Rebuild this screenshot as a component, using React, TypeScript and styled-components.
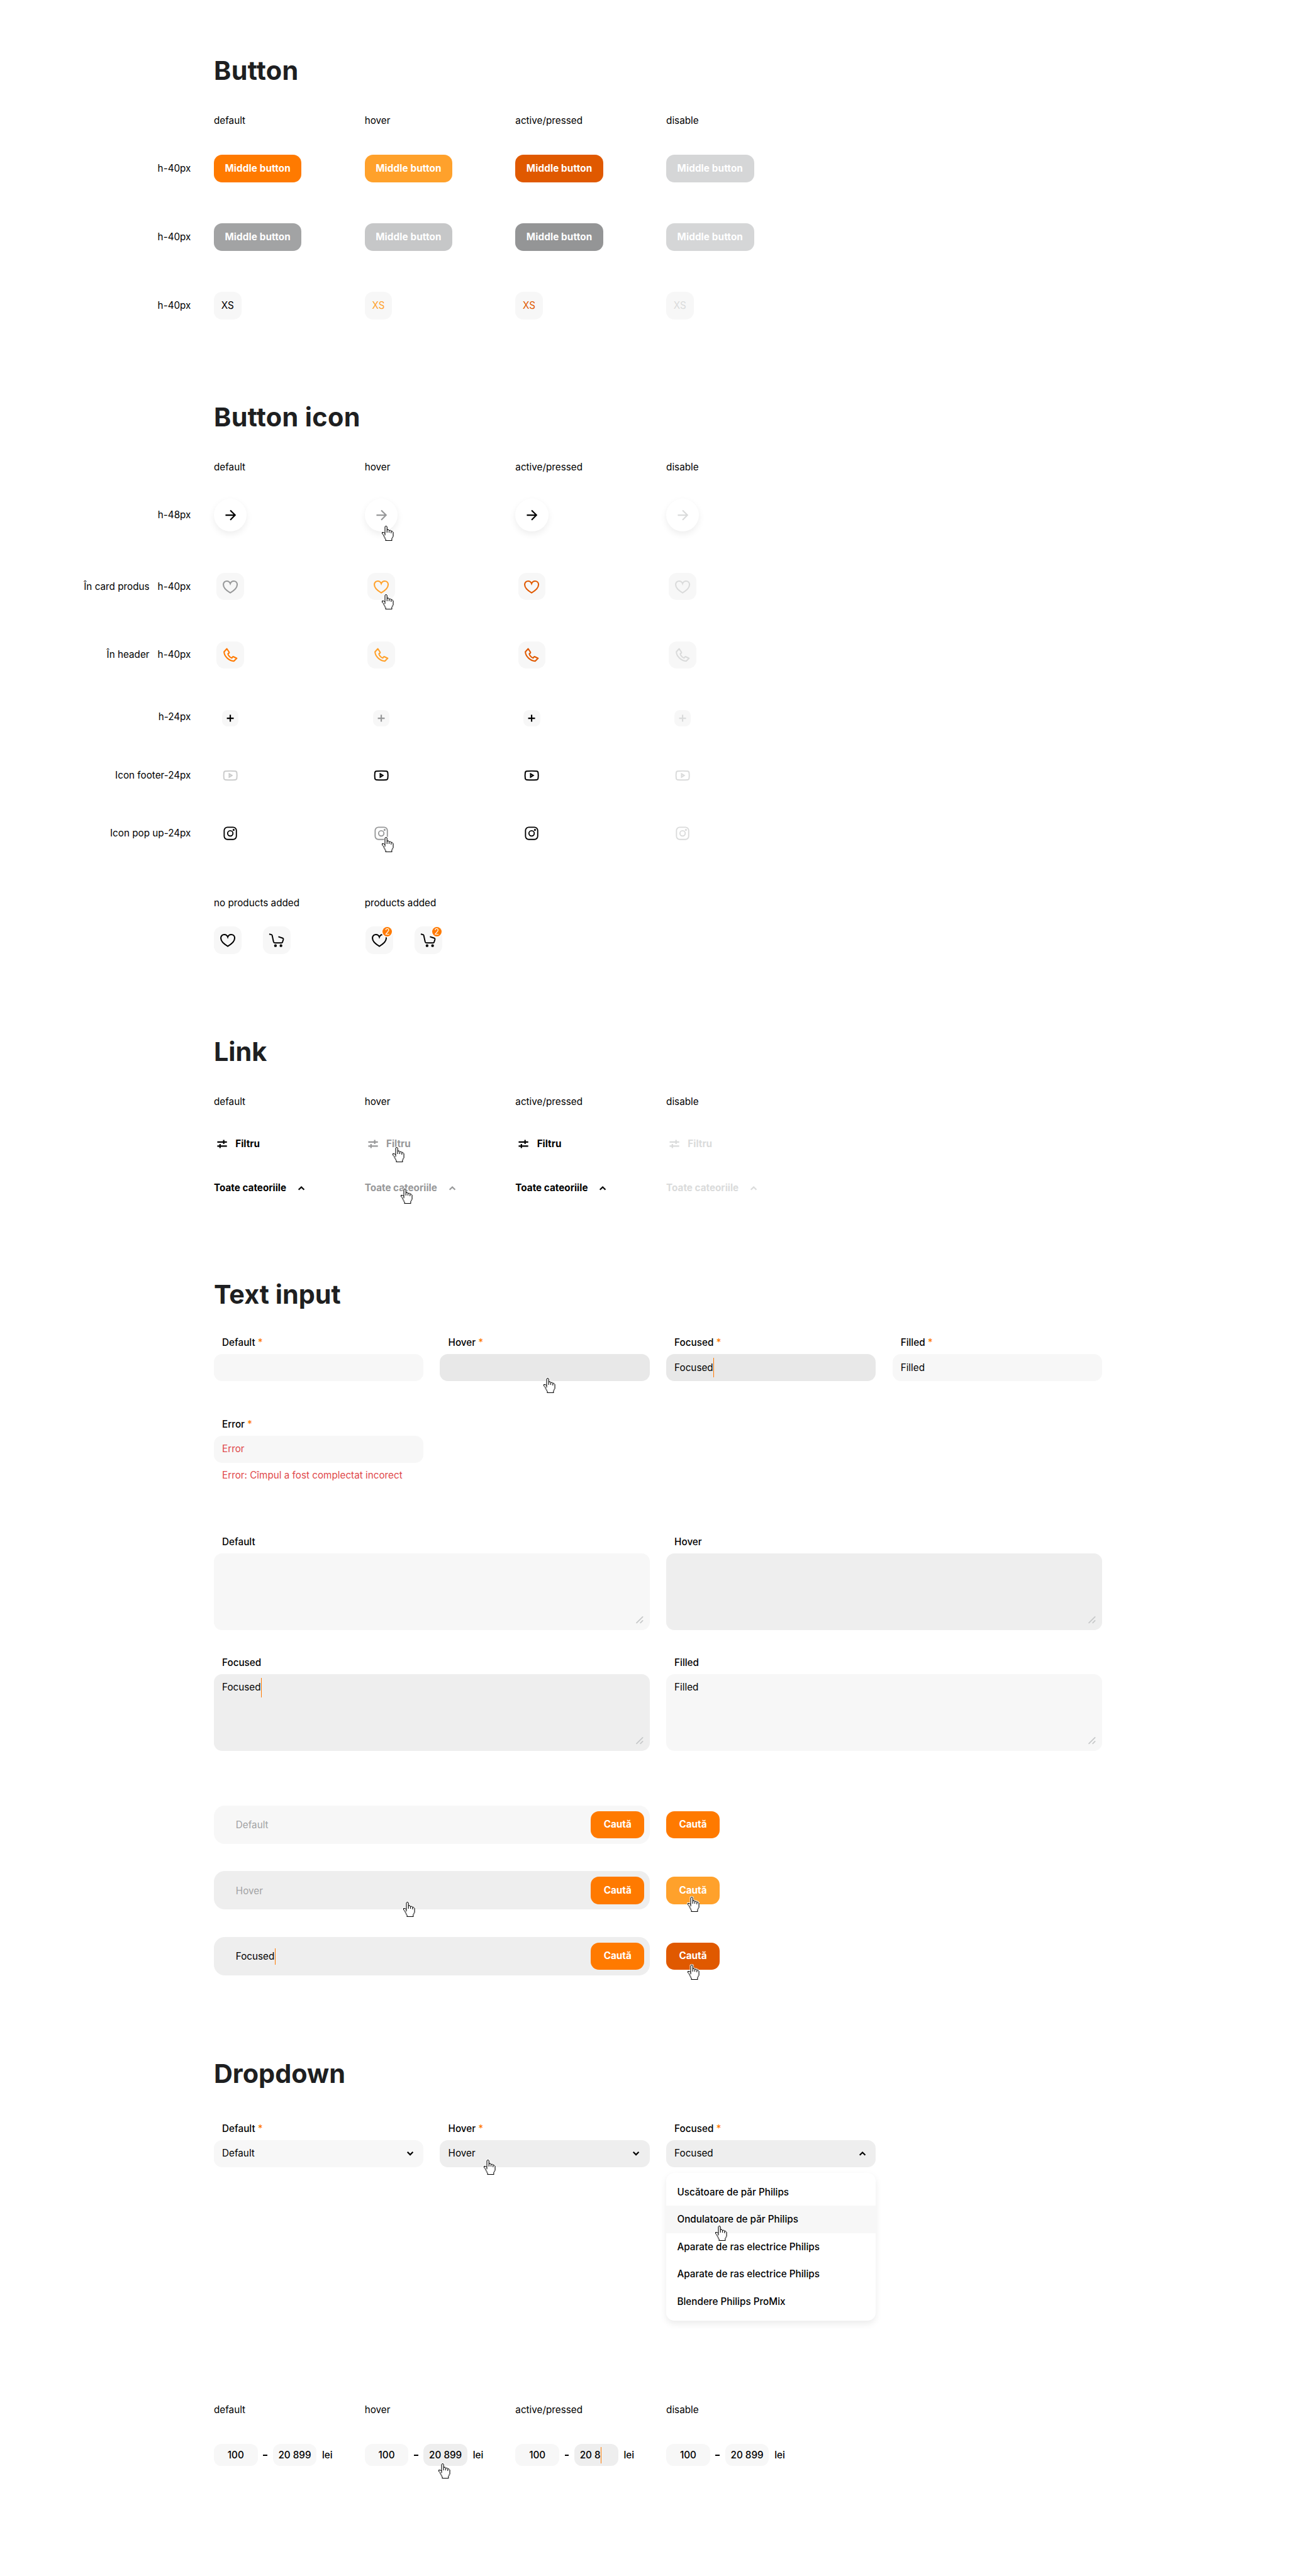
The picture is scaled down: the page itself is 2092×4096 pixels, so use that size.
import React from 'react';
import styled, { createGlobalStyle, css } from 'styled-components';

/* 1rem equals ten units of the 1920-wide design grid. */
const GlobalStyle = createGlobalStyle`
  html { font-size: calc(100vw / 192); }
  body {
    margin: 0;
    background: #fff;
    color: #000;
    font-family: Inter, "Noto Sans", sans-serif;
    font-size: 1.4rem;
    line-height: 2.4rem;
  }
  *, *::before, *::after { box-sizing: border-box; }
`;

const color = {
  ink: '#000000',
  heading: '#1e1f21',
  orange: '#ff7a00',
  orangeLight: '#ffa12b',
  orangeDark: '#e05900',
  gray: '#979899',
  grayMid: '#a2a3a4',
  grayLight: '#c6c7c8',
  disabled: '#d5d6d7',
  faint: '#dadbdb',
  surface: '#f7f7f7',
  surfaceHover: '#eeeeee',
  surfaceDark: '#e8e8e8',
  error: '#df484a',
};

/* ---------- page ---------- */

const Page = styled.main`
  display: flex;
  flex-direction: column;
  gap: 12rem;
  width: 192rem;
  padding: 8rem 0 16rem;
  overflow: hidden;
`;

const Section = styled.section`
  display: flex;
  flex-direction: column;
`;

const Heading = styled.h2<{ $tracking?: number }>`
  margin: 0 0 0 31.2rem;
  font-size: 3.8rem;
  line-height: 4.6rem;
  font-weight: 700;
  color: ${color.heading};
  letter-spacing: ${(p) => p.$tracking ?? 0}em;
`;

const StateRow = styled.div<{ $gap: number }>`
  display: grid;
  grid-template-columns: 31.2rem repeat(4, 22rem);
  margin-top: ${(p) => p.$gap}rem;
`;

const RowLabel = styled.div<{ $lift?: number }>`
  display: flex;
  align-items: center;
  justify-content: flex-end;
  gap: 1.2rem;
  padding: 0 3.35rem ${(p) => (p.$lift ?? 0) * 2}rem 0;
  line-height: ${(p) => (p.$lift ? 2 : 2.4)}rem;
  white-space: nowrap;
`;

const Cell = styled.div<{ $gap?: number; $inset?: number }>`
  position: relative;
  display: flex;
  align-items: center;
  gap: ${(p) => p.$gap ?? 0}rem;
  padding-left: ${(p) => p.$inset ?? 0}rem;
  white-space: nowrap;
`;

const IconSlot = styled.div`
  display: flex;
  align-items: center;
  justify-content: center;
  width: 4.8rem;
`;

/* ---------- cursor ---------- */

const HAND = [
  '     ##          ',
  '    #..#         ',
  '    #..#         ',
  '    #..#         ',
  '    #..#         ',
  '    #..###       ',
  '    #..#..###    ',
  '    #..#..#..##  ',
  '    #..#..#..#.# ',
  '###.#..#..#..#..#',
  '#..##........#..#',
  '#...#...........#',
  ' #..#...........#',
  '  #.#...........#',
  '  #.............#',
  '   #............#',
  '   #...........# ',
  '    #..........# ',
  '    #.........#  ',
  '     #........#  ',
  '     #........#  ',
  '     ##########  ',
];

const pixels = (test: (c: string) => boolean) =>
  HAND.flatMap((row, y) =>
    [...row].map((c, x) => (test(c) ? `M${x} ${y}h1v1h-1z` : '')),
  ).join('');

const HAND_BODY = pixels((c) => c !== ' ');
const HAND_LINE = pixels((c) => c === '#');

const CursorSvg = styled.svg<{ $x: number; $y: number }>`
  position: absolute;
  z-index: 2;
  left: ${(p) => p.$x - 0.1}rem;
  top: ${(p) => p.$y - 0.1}rem;
  width: 1.9rem;
  height: 2.4rem;
`;

const Cursor = ({ x, y }: { x: number; y: number }) => (
  <CursorSvg $x={x} $y={y} viewBox="-1 -1 19 24">
    <path d={HAND_BODY} fill="#fff" stroke="#fff" strokeWidth="1.6" />
    <path d={HAND_LINE} fill="#000" />
  </CursorSvg>
);

/* ---------- icons ---------- */

const Svg = styled.svg`
  display: block;
  flex: none;
  width: 2.4rem;
  height: 2.4rem;
  fill: none;
  stroke: currentColor;
`;

const ArrowIcon = () => (
  <Svg viewBox="0 0 24 24" strokeWidth="2">
    <path d="M5 12h14M12 5l7 7-7 7" />
  </Svg>
);

const HeartIcon = () => (
  <Svg viewBox="0 0 24 24" strokeWidth="1.9">
    <path d="M12 20.7C7.2 18 1.9 14.1 1.9 8.8C1.9 5.6 4.2 3.6 6.9 3.6C9.3 3.6 11.2 5 12 7.3C12.8 5 14.7 3.6 17.1 3.6C19.8 3.6 22.1 5.6 22.1 8.8C22.1 14.1 16.8 18 12 20.7Z" />
  </Svg>
);

const PhoneIcon = () => (
  <Svg viewBox="0 0 24 24" strokeWidth="1.9" strokeLinejoin="round">
    <path d="M7 2.3L10.3 7.4Q10.7 8.1 10.1 8.6L8.6 9.8C9.4 12.6 11.2 14.7 14.2 15.9L15.4 14.3Q15.9 13.7 16.6 14L21.4 16.3L17.2 20.5C9.6 19.6 3.2 13.4 2.9 6.9Z" />
  </Svg>
);

const PlusIcon = () => (
  <Svg viewBox="0 0 24 24" strokeWidth="2">
    <path d="M12 7v10M7 12h10" />
  </Svg>
);

const YoutubeIcon = () => (
  <Svg viewBox="0 0 24 24" strokeWidth="1.8">
    <path d="M4.9 5.7C9.6 5.3 14.6 5.3 19.3 5.7C20.6 5.8 21.4 6.6 21.5 7.9C21.9 10.7 21.9 13.3 21.5 16.1C21.4 17.4 20.6 18.2 19.3 18.3C14.6 18.7 9.6 18.7 4.9 18.3C3.6 18.2 2.8 17.4 2.7 16.1C2.3 13.3 2.3 10.7 2.7 7.9C2.8 6.6 3.6 5.8 4.9 5.7Z" />
    <path d="M10.5 9.6L14.4 12L10.5 14.4Z" />
  </Svg>
);

const InstagramIcon = () => (
  <Svg viewBox="0 0 24 24" strokeWidth="1.7">
    <rect x="3.1" y="3.1" width="17.8" height="17.8" rx="4.8" />
    <circle cx="12" cy="12" r="3.9" />
    <circle cx="16.9" cy="7" r="1.5" fill="currentColor" stroke="none" />
  </Svg>
);

const CartIcon = () => (
  <Svg viewBox="0 0 24 24" strokeWidth="1.8">
    <path d="M0.9 3L4.1 3.8Q5 4.1 5.2 5L7.2 14.3Q7.6 15.9 9 15.9H18.8Q19.9 15.9 20.2 14.9L21.5 10.8Q21.8 9.4 20.6 8.9L14.2 6.8" />
    <circle cx="10" cy="19.9" r="2" fill="currentColor" stroke="none" />
    <circle cx="18" cy="19.9" r="2" fill="currentColor" stroke="none" />
  </Svg>
);

const FilterIcon = () => (
  <Svg viewBox="0 0 24 24" strokeWidth="2">
    <path d="M5 9h14M14.4 6v6M5 15h14M9 12v6" />
  </Svg>
);

const ChevronUp = () => (
  <Svg viewBox="0 0 24 24" strokeWidth="2">
    <path d="M8 14.5L12 10.5L16 14.5" />
  </Svg>
);

const ChevronDown = () => (
  <Svg viewBox="0 0 24 24" strokeWidth="2">
    <path d="M8 9.9L12 13.9L16 9.9" />
  </Svg>
);

const Grip = styled.svg`
  position: absolute;
  right: 0.8rem;
  bottom: 0.8rem;
  width: 1.4rem;
  height: 1.4rem;
  fill: none;
  stroke: #c6c8c9;
  stroke-width: 1.6;
  stroke-linecap: round;
`;

const ResizeGrip = () => (
  <Grip viewBox="0 0 14 14">
    <path d="M2.8 11.4L11.6 2.6M8.4 11.4L11.6 8.2" />
  </Grip>
);

/* ---------- buttons ---------- */

const Button = styled.button<{ $bg: string; $width: number; $tracking?: number }>`
  display: flex;
  align-items: center;
  justify-content: center;
  flex: none;
  width: ${(p) => p.$width}rem;
  height: 4rem;
  padding: 0;
  border: 0;
  border-radius: 1.2rem;
  background: ${(p) => p.$bg};
  color: #fff;
  font: 700 1.4rem/2.4rem Inter, "Noto Sans", sans-serif;
  letter-spacing: ${(p) => p.$tracking ?? 0}em;
  white-space: nowrap;
`;

const Tile = styled.div<{ $size?: number; $color: string }>`
  position: relative;
  display: flex;
  align-items: center;
  justify-content: center;
  flex: none;
  width: ${(p) => p.$size ?? 4}rem;
  height: ${(p) => p.$size ?? 4}rem;
  border-radius: ${(p) => (p.$size ? 0.8 : 1.2)}rem;
  background: ${color.surface};
  color: ${(p) => p.$color};
`;

const RoundButton = styled.div<{ $color: string }>`
  display: flex;
  align-items: center;
  justify-content: center;
  width: 4.8rem;
  height: 4.8rem;
  border-radius: 50%;
  background: #fff;
  box-shadow: 0 0.4rem 1rem rgba(0, 0, 0, 0.07);
  color: ${(p) => p.$color};
`;

const BareIcon = styled.div<{ $color: string }>`
  color: ${(p) => p.$color};
`;

const Badge = styled.span`
  position: absolute;
  top: 0.1rem;
  right: 0.1rem;
  display: flex;
  align-items: center;
  justify-content: center;
  width: 1.4rem;
  height: 1.4rem;
  border-radius: 50%;
  background: ${color.orange};
  box-shadow: 0 0 0 0.17rem #fcfcfc;
  color: #fff;
  font-size: 1.15rem;
  line-height: 1.4rem;
`;

const TextLink = styled.a<{ $color: string; $gap: number }>`
  display: flex;
  align-items: center;
  gap: ${(p) => p.$gap}rem;
  height: 2.4rem;
  color: ${(p) => p.$color};
  font-weight: 700;
`;

/* ---------- fields ---------- */

const FieldRow = styled.div<{ $gap: number; $columns: number }>`
  display: grid;
  grid-template-columns: repeat(${(p) => p.$columns}, 1fr);
  column-gap: 2.4rem;
  width: 129.6rem;
  margin: ${(p) => p.$gap}rem 0 0 31.2rem;
`;

const Field = styled.div`
  position: relative;
  display: flex;
  flex-direction: column;
`;

const FieldLabel = styled.label`
  padding-left: 1.2rem;
  margin-bottom: 0.4rem;
  font-weight: 500;
`;

const Star = styled.span`
  color: ${color.orange};
`;

const box = css<{ $bg: string; $color?: string }>`
  position: relative;
  display: flex;
  background: ${(p) => p.$bg};
  color: ${(p) => p.$color ?? color.ink};
`;

const InputBox = styled.div<{ $bg: string; $color?: string }>`
  ${box}
  align-items: center;
  height: 4rem;
  padding: 0 0.8rem 0 1.2rem;
  border-radius: 1.2rem;
`;

const AreaBox = styled.div<{ $bg: string; $color?: string }>`
  ${box}
  align-items: flex-start;
  height: 11.2rem;
  padding: 0.6rem 1.2rem;
  border-radius: 1.2rem;
  line-height: 2.8rem;
`;

const SearchBox = styled.div<{ $bg: string; $color?: string }>`
  ${box}
  align-items: center;
  width: 63.6rem;
  height: 5.6rem;
  padding: 0 0.8rem 0 3.2rem;
  border-radius: 1.6rem;
`;

const SearchText = styled.span`
  display: flex;
  align-items: center;
  flex: 1;
  padding-top: 0.15rem;
`;

const SearchRow = styled.div<{ $gap: number }>`
  display: flex;
  align-items: center;
  gap: 2.4rem;
  margin: ${(p) => p.$gap}rem 0 0 31.2rem;
`;

const ButtonAnchor = styled.div`
  position: relative;
`;

const Grow = styled.span`
  flex: 1;
`;

const Caret = styled.i<{ $height: number }>`
  flex: none;
  width: 0.1rem;
  height: ${(p) => p.$height}rem;
  margin-left: 0.05rem;
  background: ${color.orange};
`;

const ErrorNote = styled.p`
  margin: 0.6rem 0 0;
  padding-left: 1.2rem;
  color: ${color.error};
`;

const Menu = styled.ul`
  margin: 0.8rem 0 0;
  padding: 0.8rem 0;
  list-style: none;
  border-radius: 1.2rem;
  background: #fff;
  box-shadow: 0 0.4rem 1rem rgba(0, 0, 0, 0.08);
`;

const MenuItem = styled.li<{ $active?: boolean }>`
  position: relative;
  height: 4rem;
  padding: 0 1.6rem;
  line-height: 4rem;
  font-weight: 500;
  background: ${(p) => (p.$active ? color.surface : 'transparent')};
`;

const PriceBox = styled.div<{ $bg: string; $start?: boolean }>`
  position: relative;
  display: flex;
  align-items: center;
  justify-content: ${(p) => (p.$start ? 'flex-start' : 'center')};
  width: 6.4rem;
  height: 3.2rem;
  padding: 0 0.8rem;
  border-radius: 1.1rem;
  background: ${(p) => p.$bg};
  font-weight: 500;
  white-space: pre;
`;

const PriceSign = styled.span`
  font-weight: 500;
`;

const Dash = styled.span`
  width: 0.6rem;
  height: 0.2rem;
  margin: 0.1rem 0 0;
  background: currentColor;
`;

/* ---------- composed parts ---------- */

const STATES = ['default', 'hover', 'active/pressed', 'disable'];

const StateNames = ({ gap = 3.8 }: { gap?: number }) => (
  <StateRow $gap={gap}>
    <RowLabel />
    {STATES.map((s) => (
      <Cell key={s}>{s}</Cell>
    ))}
  </StateRow>
);

type IconRowProps = {
  gap?: number;
  note?: string;
  label: string;
  lift?: number;
  colors: string[];
  cursorY?: number;
  render: (c: string) => React.ReactNode;
};

const IconRow = ({ gap = 6, note, label, lift, colors, cursorY, render }: IconRowProps) => (
  <StateRow $gap={gap}>
    <RowLabel $lift={lift}>
      {note && <span>{note}</span>}
      <span>{label}</span>
    </RowLabel>
    {colors.map((c, i) => (
      <Cell key={i}>
        <IconSlot>{render(c)}</IconSlot>
        {i === 1 && cursorY !== undefined && <Cursor x={2.5} y={cursorY} />}
      </Cell>
    ))}
  </StateRow>
);

const Label = ({ children, required }: { children: string; required?: boolean }) => (
  <FieldLabel>
    {children}
    {required && <Star> *</Star>}
  </FieldLabel>
);

const BUTTON_ROWS = [
  [color.orange, color.orangeLight, color.orangeDark, color.disabled],
  [color.grayMid, color.grayLight, '#949596', color.disabled],
];

const MENU = [
  'Uscătoare de păr Philips',
  'Ondulatoare de păr Philips',
  'Aparate de ras electrice Philips',
  'Aparate de ras electrice Philips',
  'Blendere Philips ProMix',
];

export default function App() {
  return (
    <>
      <GlobalStyle />
      <Page>
        <Section>
          <Heading $tracking={0.008}>Button</Heading>
          <StateNames />
          {BUTTON_ROWS.map((row, r) => (
            <StateRow key={r} $gap={r ? 6 : 3.8}>
              <RowLabel>h-40px</RowLabel>
              {row.map((bg, i) => (
                <Cell key={i}>
                  <Button $bg={bg} $width={12.8} $tracking={0.008}>Middle button</Button>
                </Cell>
              ))}
            </StateRow>
          ))}
          <StateRow $gap={6}>
            <RowLabel>h-40px</RowLabel>
            {[color.ink, color.orangeLight, color.orangeDark, color.faint].map((c) => (
              <Cell key={c}>
                <Tile $color={c}>XS</Tile>
              </Cell>
            ))}
          </StateRow>
        </Section>

        <Section>
          <Heading $tracking={0.008}>Button icon</Heading>
          <StateNames />
          <IconRow
            gap={3.4}
            label="h-48px"
            colors={[color.ink, color.gray, color.ink, color.faint]}
            cursorY={3.9}
            render={(c) => <RoundButton $color={c}><ArrowIcon /></RoundButton>}
          />
          <IconRow
            note="În card produs"
            label="h-40px"
            colors={[color.gray, color.orangeLight, color.orangeDark, color.faint]}
            cursorY={3.1}
            render={(c) => <Tile $color={c}><HeartIcon /></Tile>}
          />
          <IconRow
            note="În header"
            label="h-40px"
            colors={[color.orange, color.orangeLight, color.orangeDark, color.faint]}
            render={(c) => <Tile $color={c}><PhoneIcon /></Tile>}
          />
          <IconRow
            label="h-24px"
            lift={0.2}
            colors={[color.ink, color.gray, color.ink, color.faint]}
            render={(c) => <Tile $size={2.4} $color={c}><PlusIcon /></Tile>}
          />
          <IconRow
            label="Icon footer-24px"
            colors={['#cbcccc', color.ink, color.ink, color.faint]}
            render={(c) => <BareIcon $color={c}><YoutubeIcon /></BareIcon>}
          />
          <IconRow
            label="Icon pop up-24px"
            colors={[color.ink, color.gray, color.ink, color.faint]}
            cursorY={1.8}
            render={(c) => <BareIcon $color={c}><InstagramIcon /></BareIcon>}
          />
          <StateRow $gap={7.8}>
            <RowLabel />
            <Cell>no products added</Cell>
            <Cell>products added</Cell>
          </StateRow>
          <StateRow $gap={2.2}>
            <RowLabel />
            <Cell $gap={3.2}>
              <Tile $color={color.ink}><HeartIcon /></Tile>
              <Tile $color={color.ink}><CartIcon /></Tile>
            </Cell>
            <Cell $gap={3.2} $inset={0.12}>
              <Tile $color={color.ink}><HeartIcon /><Badge>2</Badge></Tile>
              <Tile $color={color.ink}><CartIcon /><Badge>2</Badge></Tile>
            </Cell>
          </StateRow>
        </Section>

        <Section>
          <Heading>Link</Heading>
          <StateNames />
          <StateRow $gap={3.8}>
            <RowLabel />
            {[color.ink, color.gray, color.ink, color.faint].map((c, i) => (
              <Cell key={i}>
                <TextLink $color={c} $gap={0.75}><FilterIcon />Filtru</TextLink>
                {i === 1 && <Cursor x={4.1} y={1.6} />}
              </Cell>
            ))}
          </StateRow>
          <StateRow $gap={4}>
            <RowLabel />
            {[color.ink, color.gray, color.ink, color.faint].map((c, i) => (
              <Cell key={i}>
                <TextLink $color={c} $gap={1}>Toate cateoriile<ChevronUp /></TextLink>
                {i === 1 && <Cursor x={5.3} y={1.3} />}
              </Cell>
            ))}
          </StateRow>
        </Section>

        <Section>
          <Heading>Text input</Heading>
          <FieldRow $gap={3.6} $columns={4}>
            <Field>
              <Label required>Default</Label>
              <InputBox $bg={color.surface} />
            </Field>
            <Field>
              <Label required>Hover</Label>
              <InputBox $bg={color.surfaceDark}>
                <Cursor x={15.1} y={3.5} />
              </InputBox>
            </Field>
            <Field>
              <Label required>Focused</Label>
              <InputBox $bg={color.surfaceDark}>Focused<Caret $height={2.8} /></InputBox>
            </Field>
            <Field>
              <Label required>Filled</Label>
              <InputBox $bg={color.surface}>Filled</InputBox>
            </Field>
          </FieldRow>
          <FieldRow $gap={5.1} $columns={4}>
            <Field>
              <Label required>Error</Label>
              <InputBox $bg={color.surface} $color={color.error}>Error</InputBox>
              <ErrorNote>Error: Cîmpul a fost complectat incorect</ErrorNote>
            </Field>
          </FieldRow>
          <FieldRow $gap={7.4} $columns={2}>
            <Field>
              <Label>Default</Label>
              <AreaBox $bg={color.surface}><ResizeGrip /></AreaBox>
            </Field>
            <Field>
              <Label>Hover</Label>
              <AreaBox $bg={color.surfaceHover}><ResizeGrip /></AreaBox>
            </Field>
          </FieldRow>
          <FieldRow $gap={3.6} $columns={2}>
            <Field>
              <Label>Focused</Label>
              <AreaBox $bg={color.surfaceHover}>Focused<Caret $height={2.8} /><ResizeGrip /></AreaBox>
            </Field>
            <Field>
              <Label>Filled</Label>
              <AreaBox $bg={color.surface}>Filled<ResizeGrip /></AreaBox>
            </Field>
          </FieldRow>
          <SearchRow $gap={8}>
            <SearchBox $bg={color.surface} $color={color.grayMid}>
              <SearchText>Default</SearchText>
              <Button $bg={color.orange} $width={7.8}>Caută</Button>
            </SearchBox>
            <Button $bg={color.orange} $width={7.8}>Caută</Button>
          </SearchRow>
          <SearchRow $gap={4}>
            <SearchBox $bg={color.surfaceHover} $color={color.grayMid}>
              <SearchText>Hover</SearchText>
              <Button $bg={color.orange} $width={7.8}>Caută</Button>
              <Cursor x={27.6} y={4.5} />
            </SearchBox>
            <ButtonAnchor>
              <Button $bg={color.orangeLight} $width={7.8}>Caută</Button>
              <Cursor x={3.1} y={2.95} />
            </ButtonAnchor>
          </SearchRow>
          <SearchRow $gap={4}>
            <SearchBox $bg={color.surfaceHover}>
              <SearchText>Focused<Caret $height={2.4} /></SearchText>
              <Button $bg={color.orange} $width={7.8}>Caută</Button>
            </SearchBox>
            <ButtonAnchor>
              <Button $bg={color.orangeDark} $width={7.8}>Caută</Button>
              <Cursor x={3.1} y={3.25} />
            </ButtonAnchor>
          </SearchRow>
        </Section>

        <Section>
          <Heading>Dropdown</Heading>
          <FieldRow $gap={4.6} $columns={4}>
            <Field>
              <Label required>Default</Label>
              <InputBox $bg={color.surface}><Grow>Default</Grow><ChevronDown /></InputBox>
            </Field>
            <Field>
              <Label required>Hover</Label>
              <InputBox $bg={color.surfaceHover}>
                <Grow>Hover</Grow>
                <ChevronDown />
                <Cursor x={6.4} y={2.9} />
              </InputBox>
            </Field>
            <Field>
              <Label required>Focused</Label>
              <InputBox $bg={color.surfaceHover}><Grow>Focused</Grow><ChevronUp /></InputBox>
              <Menu>
                {MENU.map((m, i) => (
                  <MenuItem key={i} $active={i === 1}>
                    {m}
                    {i === 1 && <Cursor x={7.2} y={2.9} />}
                  </MenuItem>
                ))}
              </Menu>
            </Field>
          </FieldRow>
          <StateNames gap={11.8} />
          <StateRow $gap={3.8}>
            <RowLabel />
            {STATES.map((s, i) => (
              <Cell key={s} $gap={0.8}>
                <PriceBox $bg={color.surface}>100</PriceBox>
                <Dash />
                {i === 2 ? (
                  <PriceBox $bg={color.surfaceHover} $start>20 8<Caret $height={2.4} /></PriceBox>
                ) : (
                  <PriceBox $bg={i === 1 ? color.surfaceHover : color.surface}>
                    20 899
                    {i === 1 && <Cursor x={2.2} y={2.8} />}
                  </PriceBox>
                )}
                <PriceSign>lei</PriceSign>
              </Cell>
            ))}
          </StateRow>
        </Section>
      </Page>
    </>
  );
}
